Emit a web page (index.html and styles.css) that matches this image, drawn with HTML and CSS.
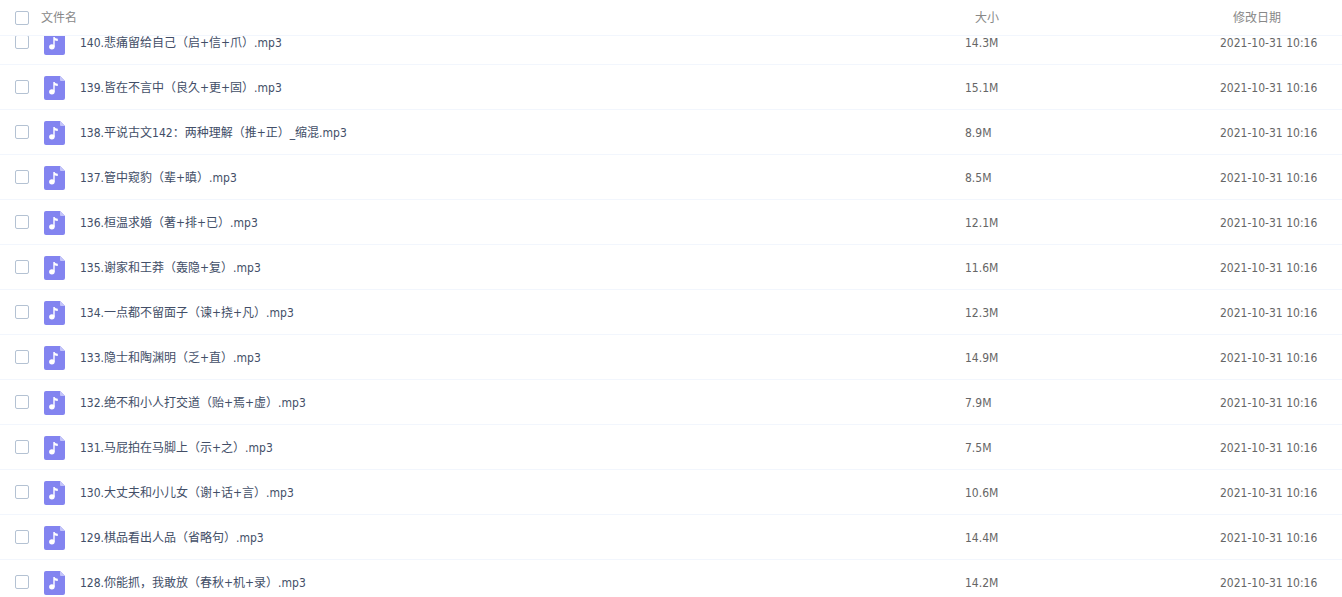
FILE: index.html
```html
<!DOCTYPE html>
<html lang="zh-CN">
<head>
<meta charset="utf-8">
<title>文件列表</title>
<link rel="stylesheet" href="styles.css">
</head>
<body>
<svg class="sprite" aria-hidden="true">
  <symbol id="audio" viewBox="0 0 21 24">
    <path fill="#8384f0" d="M2 0H16L21 5V22a2 2 0 0 1-2 2H2a2 2 0 0 1-2-2V2a2 2 0 0 1 2-2Z"/>
    <path fill="#c3c4fa" d="M16 0L21 5H17a1 1 0 0 1-1-1Z"/>
    <ellipse cx="7.9" cy="15.8" rx="2.8" ry="2.6" fill="#fff"/>
    <path fill="#fff" d="M9.3 6H10.7C10.9 7.2 12 7.6 13.8 7.8V10C12.4 10 11.4 9.7 10.7 9.2V15.8H9.3Z"/>
  </symbol>
</svg>
<main class="files">
  <header class="head">
    <input class="check" type="checkbox" id="all">
    <label class="head-name" for="all">文件名</label>
    <span class="head-size">大小</span>
    <span class="head-date">修改日期</span>
  </header>
  <div class="scroller">
    <table class="list">
      <colgroup><col class="col-name"><col class="col-size"><col class="col-date"></colgroup>
      <tbody id="rows"></tbody>
    </table>
  </div>
</main>
<script src="files.js"></script>
</body>
</html>
```
FILE: styles.css
```css
* {
  box-sizing: border-box;
}

body {
  margin: 0;
  background: #fff;
  color: #666;
  font: 12px/18px "DejaVu Sans Condensed", "Noto Sans CJK SC", sans-serif;
}

.sprite {
  display: none;
}

.files {
  display: flex;
  flex-direction: column;
  height: 100vh;
  overflow: hidden;
}

.head {
  display: flex;
  flex: none;
  align-items: center;
  height: 36px;
  padding-left: 15px;
  border-bottom: 1px solid #f2f6fd;
  color: #888;
}

.head-name {
  flex: 1;
  padding-left: 12px;
}

.head-size {
  width: 258px;
}

.head-date {
  width: 109px;
}

.scroller {
  flex: 1;
  min-height: 0;
  overflow: hidden;
}

.list {
  width: 100%;
  margin-top: -16px;
  border-collapse: separate;
  border-spacing: 0;
  table-layout: fixed;
}

.col-size {
  width: 255px;
}

.col-date {
  width: 122px;
}

.list td {
  height: 45px;
  padding: 0;
  border-bottom: 1px solid #f2f6fd;
  vertical-align: middle;
  white-space: nowrap;
}

.list .meta {
  padding-top: 2px;
}

.file {
  display: flex;
  align-items: center;
  padding-left: 15px;
}

.check {
  appearance: none;
  flex: none;
  width: 14px;
  height: 14px;
  margin: 0;
  border: 1px solid #b4c2d3;
  border-radius: 2px;
  background: #fff;
}

.check:checked {
  background: #8384f0;
}

.icon {
  flex: none;
  width: 21px;
  height: 24px;
  margin: 2px 15px 0;
}

.name {
  overflow: hidden;
  padding-top: 2px;
  color: #424e67;
  text-overflow: ellipsis;
}
```
FILE: files.js
```js
const files = [
  ["140.悲痛留给自己（启+信+爪）.mp3", "14.3M"],
  ["139.皆在不言中（良久+更+固）.mp3", "15.1M"],
  ["138.平说古文142：两种理解（推+正）_缩混.mp3", "8.9M"],
  ["137.管中窥豹（辈+瞋）.mp3", "8.5M"],
  ["136.桓温求婚（著+排+已）.mp3", "12.1M"],
  ["135.谢家和王莽（轰隐+复）.mp3", "11.6M"],
  ["134.一点都不留面子（谏+挠+凡）.mp3", "12.3M"],
  ["133.隐士和陶渊明（乏+直）.mp3", "14.9M"],
  ["132.绝不和小人打交道（贻+焉+虚）.mp3", "7.9M"],
  ["131.马屁拍在马脚上（示+之）.mp3", "7.5M"],
  ["130.大丈夫和小儿女（谢+话+言）.mp3", "10.6M"],
  ["129.棋品看出人品（省略句）.mp3", "14.4M"],
  ["128.你能抓，我敢放（春秋+机+录）.mp3", "14.2M"]
];

document.getElementById("rows").innerHTML = files.map(([name, size], i) => `
  <tr>
    <td><div class="file">
      <input class="check" type="checkbox" id="file-${i}">
      <svg class="icon" aria-hidden="true"><use href="#audio"/></svg>
      <label class="name" for="file-${i}">${name}</label>
    </div></td>
    <td class="meta">${size}</td>
    <td class="meta">2021-10-31 10:16</td>
  </tr>`).join("");
```
